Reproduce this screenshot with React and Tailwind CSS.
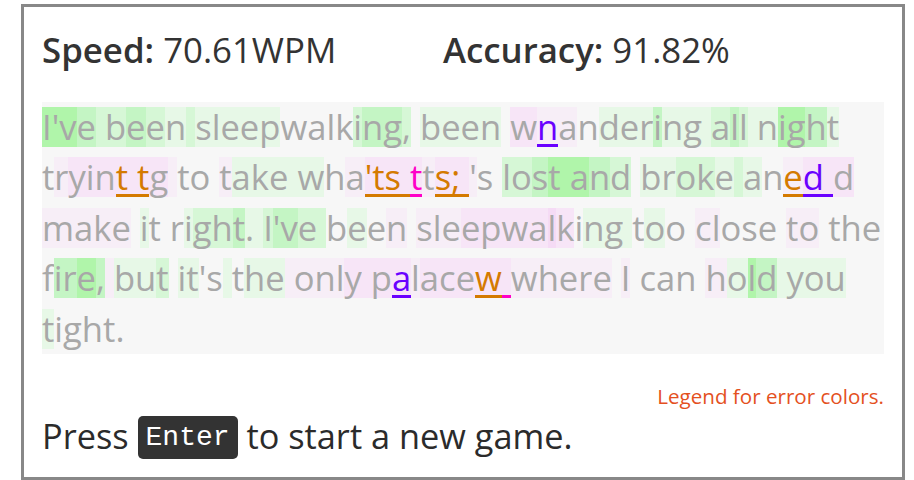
import React from 'react';

// per-character background levels (green = fast, pink = slow)
const BG = {
  '.': '',
  '1': 'bg-[#e7f8e7]',
  '2': 'bg-[#d6f7d6]',
  '3': 'bg-[#c4f5c4]',
  '4': 'bg-[#b0f5aa]',
  a: 'bg-[#f7eef7]',
  b: 'bg-[#f7e5f7]',
  c: 'bg-[#f5dbf5]',
};

// error colours: text + thick underline
const ERR = {
  '.': '',
  o: 'text-[#d47a00] shadow-[inset_0_-3px_0_#d47a00]',
  m: 'text-[#ff00c8] shadow-[inset_0_-3px_0_#ff00c8]',
  p: 'text-[#6a00ff] shadow-[inset_0_-3px_0_#6a00ff]',
};

// [text, background codes, error codes]
const LINES = [
  [
    ["I've been ", '4443223212', '..........'],
    ['sleepwalking,', '11111....2332', '.............'],
    [' been ', '.1111.', '......'],
    ['wnandering', 'baa.111311', '.p........'],
    [' all ', '12321', '.....'],
    ['night', '14431', '.....'],
  ],
  [
    ['tryint', '.abbbb', '.....o'],
    [' ', 'b', 'o'],
    ['tg', 'bb', 'o.'],
    [' to ', 'a...', '....'],
    ['take', 'a111', '....'],
    [' ', '1', '.'],
    ["wha'ts", '1.abbb', '...ooo'],
    [' ', 'b', 'o'],
    ['tts;', 'babb', 'm.oo'],
    [' ', 'b', 'o'],
    ["'s", 'a.', '..'],
    [' lost ', '.22344', '......'],
    ['and', '432', '...'],
    [' broke ', '.112212', '.......'],
    ['aned', '1.ab', '..op'],
    [' d', 'bb', 'p.'],
  ],
  [
    ['make', 'aaaa', '....'],
    [' ', '.', '.'],
    ['it', '1.', '..'],
    [' ', '.', '.'],
    ['right.', '.12231', '......'],
    [' ', '1', '.'],
    ["I've", '2332', '....'],
    [' ', '2', '.'],
    ['been', '.1.a', '....'],
    [' ', '.', '.'],
    ['sleepwalking', 'aaabbbbcb.11', '............'],
    [' ', '1', '.'],
    ['too', '.1.', '...'],
    [' ', '.', '.'],
    ['close', 'aa...', '.....'],
    [' ', '.', '.'],
    ['to', 'aa', '..'],
    [' ', '.', '.'],
    ['the', '...', '...'],
  ],
  [
    ['fire,', '.3343', '.....'],
    [' ', 'a', '.'],
    ['but', '112', '...'],
    [' ', '.', '.'],
    ["it's", '11..', '....'],
    [' ', '1', '.'],
    ['the', '.11', '...'],
    [' ', 'a', '.'],
    ['only', 'aaab', '....'],
    [' ', 'b', '.'],
    ['palacew', 'bbabbbb', '.p....o'],
    [' ', 'b', 'm'],
    ['where', 'aaaaa', '.....'],
    [' ', '.', '.'],
    ['I', 'a', '.'],
    [' ', '.', '.'],
    ['can', '...', '...'],
    [' ', '.', '.'],
    ['hold', 'a143', '....'],
    [' ', '1', '.'],
    ['you', '111', '...'],
  ],
  [['tight.', '1.....', '......']],
];

const Char = ({ ch, bg, err }) => (
  <span className={`inline-block h-[40px] leading-[40px] align-top ${BG[bg] || ''} ${ERR[err] || ''}`}>
    {ch}
  </span>
);

const TextLine = ({ segments }) => {
  const chars = [];
  segments.forEach(([text, bg, err], s) => {
    text.split('').forEach((ch, i) => {
      chars.push(<Char key={`${s}-${i}`} ch={ch} bg={bg[i]} err={err[i]} />);
    });
  });
  return <div className="h-[50.4px] pt-[5px] whitespace-pre">{chars}</div>;
};

export default function App() {
  return (
    <div className="w-[914px] h-[480px] overflow-hidden bg-white pt-[4px] pl-[21px] font-['Open_Sans',sans-serif]">
      <div className="w-[884px] h-[476px] border-[3px] border-[#888] px-[18px] pt-[18px]">
        {/* stats */}
        <div className="flex h-[77px] pt-[2px] text-[34.8px] leading-[46px] text-[#333]">
          <div className="w-[401px]">
            <span className="font-semibold">Speed:</span> 70.61WPM
          </div>
          <div>
            <span className="font-semibold">Accuracy:</span> 91.82%
          </div>
        </div>

        {/* typed text with per-key timing colours */}
        <div className="bg-[#f7f7f7] text-[34.6px] text-[#a8a8a8]">
          {LINES.map((segs, i) => (
            <TextLine key={i} segments={segs} />
          ))}
        </div>

        <div className="mt-[28px] text-right text-[20.6px] leading-[28px] text-[#e4501e]">
          Legend for error colors.
        </div>

        <div className="mt-[3px] text-[34.3px] leading-[46px] text-[#2b2b2b]">
          Press{' '}
          <kbd className="inline-block h-[43px] px-[8px] rounded-[5px] bg-[#333] text-white font-['Liberation_Mono',monospace] text-[28px] leading-[43px] align-[4px]">
            Enter
          </kbd>{' '}
          to start a new game.
        </div>
      </div>
    </div>
  );
}
